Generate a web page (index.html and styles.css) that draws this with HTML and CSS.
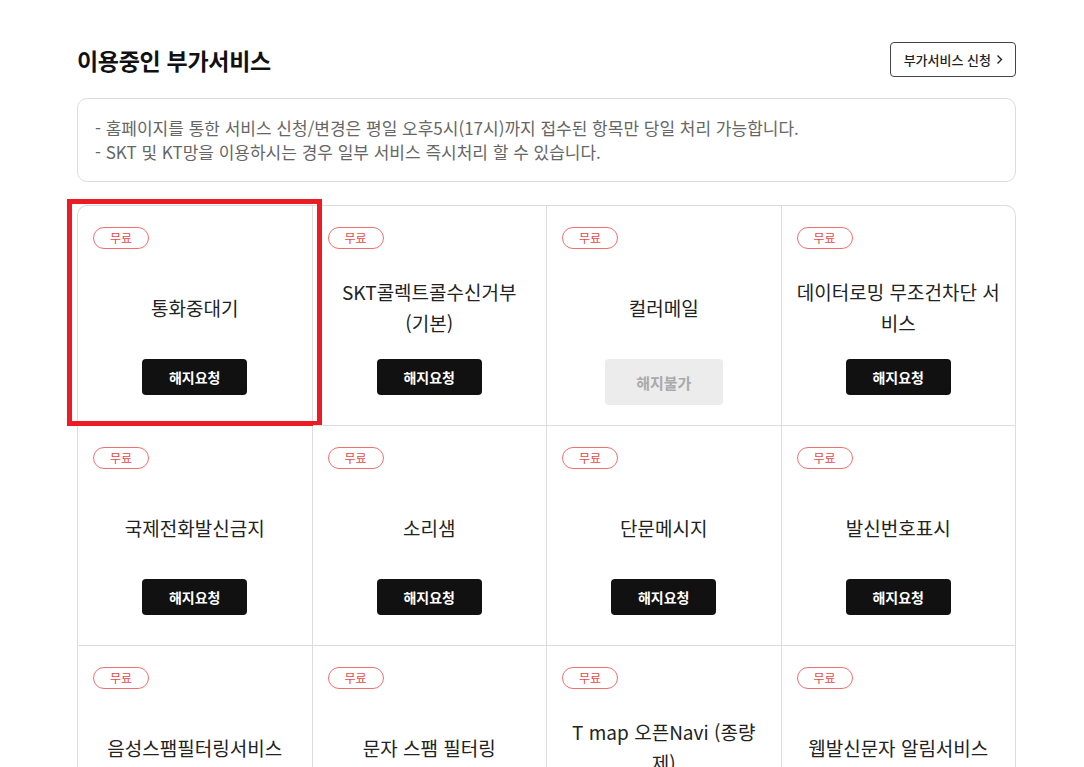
FILE: index.html
```html
<!DOCTYPE html>
<html lang="ko">
<head>
    <meta charset="UTF-8">
    <meta name="viewport" content="width=device-width, initial-scale=1.0">
    <title>이용중인 부가서비스</title>
    <link rel="stylesheet" href="styles.css">
</head>

<body>
    <div class="page">
        <!-- Header -->
        <div class="page-header">
            <h2 class="page-title">이용중인 부가서비스</h2>
            <a class="apply-btn" href="#">부가서비스 신청
                <svg class="chev" width="7" height="11" viewBox="0 0 7 11"><path d="M1.5 1.5 L5.5 5.5 L1.5 9.5" fill="none" stroke="#222" stroke-width="1.4"/></svg>
            </a>
        </div>

        <!-- Notice -->
        <div class="notice">
            <p>- 홈페이지를 통한 서비스 신청/변경은 평일 오후5시(17시)까지 접수된 항목만 당일 처리 가능합니다.</p>
            <p>- SKT 및 KT망을 이용하시는 경우 일부 서비스 즉시처리 할 수 있습니다.</p>
        </div>

        <!-- Services -->
        <div class="service-grid">
            <div class="service is-selected">
                <span class="badge">무료</span>
                <div class="service-name"><span>통화중대기</span></div>
                <button class="cancel-btn">해지요청</button>
            </div>
            <div class="service">
                <span class="badge">무료</span>
                <div class="service-name"><span>SKT콜렉트콜수신거부 (기본)</span></div>
                <button class="cancel-btn">해지요청</button>
            </div>
            <div class="service">
                <span class="badge">무료</span>
                <div class="service-name"><span>컬러메일</span></div>
                <button class="cancel-btn disabled">해지불가</button>
            </div>
            <div class="service">
                <span class="badge">무료</span>
                <div class="service-name"><span>데이터로밍 무조건차단 서비스</span></div>
                <button class="cancel-btn">해지요청</button>
            </div>

            <div class="service">
                <span class="badge">무료</span>
                <div class="service-name"><span>국제전화발신금지</span></div>
                <button class="cancel-btn">해지요청</button>
            </div>
            <div class="service">
                <span class="badge">무료</span>
                <div class="service-name"><span>소리샘</span></div>
                <button class="cancel-btn">해지요청</button>
            </div>
            <div class="service">
                <span class="badge">무료</span>
                <div class="service-name"><span>단문메시지</span></div>
                <button class="cancel-btn">해지요청</button>
            </div>
            <div class="service">
                <span class="badge">무료</span>
                <div class="service-name"><span>발신번호표시</span></div>
                <button class="cancel-btn">해지요청</button>
            </div>

            <div class="service">
                <span class="badge">무료</span>
                <div class="service-name"><span>음성스팸필터링서비스</span></div>
                <button class="cancel-btn">해지요청</button>
            </div>
            <div class="service">
                <span class="badge">무료</span>
                <div class="service-name"><span>문자 스팸 필터링</span></div>
                <button class="cancel-btn">해지요청</button>
            </div>
            <div class="service">
                <span class="badge">무료</span>
                <div class="service-name"><span>T map 오픈Navi (종량제)</span></div>
                <button class="cancel-btn">해지요청</button>
            </div>
            <div class="service">
                <span class="badge">무료</span>
                <div class="service-name"><span>웹발신문자 알림서비스</span></div>
                <button class="cancel-btn">해지요청</button>
            </div>
        </div>
    </div>
</body>
</html>
```

FILE: styles.css
```css
body {
    font-family: "Noto Sans CJK KR", "Noto Sans", sans-serif;
    margin: 0;
    padding: 0;
    color: #222;
    background-color: #fff;
}

.page {
    width: 939px;
    margin-left: 77px;
    padding-top: 42px;
    padding-bottom: 40px;
}

/* Header */
.page-header {
    display: flex;
    align-items: center;
    justify-content: space-between;
    height: 35px;
}

.page-title {
    margin: 0;
    font-size: 23px;
    font-weight: 700;
    color: #111;
    letter-spacing: -0.3px;
}

.apply-btn {
    display: flex;
    align-items: center;
    gap: 5px;
    box-sizing: border-box;
    height: 35px;
    padding: 0 12px 0 13px;
    border: 1px solid #444;
    border-radius: 4px;
    color: #222;
    font-size: 13px;
    font-weight: 500;
    text-decoration: none;
}

.chev {
    display: block;
}

/* Notice */
.notice {
    margin-top: 21px;
    padding: 17px 17px;
    border: 1px solid #ddd;
    border-radius: 10px;
}

.notice p {
    margin: 0;
    font-size: 17px;
    line-height: 24px;
    color: #666;
}

/* Grid */
.service-grid {
    display: grid;
    grid-template-columns: repeat(4, 1fr);
    margin-top: 23px;
    border-top: 1px solid #ddd;
    border-left: 1px solid #ddd;
    border-radius: 10px 10px 0 0;
}

.service {
    position: relative;
    display: flex;
    flex-direction: column;
    align-items: center;
    box-sizing: border-box;
    height: 220px;
    padding: 21px 15px 0;
    border-right: 1px solid #ddd;
    border-bottom: 1px solid #ddd;
}

.service:first-child {
    border-top-left-radius: 10px;
}

.service:nth-child(4) {
    border-top-right-radius: 10px;
}

.service.is-selected::after {
    content: "";
    position: absolute;
    top: -7px;
    left: -11px;
    right: -10px;
    bottom: -1px;
    border: 5px solid #ec1c24;
    pointer-events: none;
}

.badge {
    align-self: flex-start;
    box-sizing: border-box;
    width: 56px;
    height: 22px;
    border: 1px solid #f07070;
    border-radius: 11px;
    color: #e94848;
    font-size: 12px;
    line-height: 20px;
    text-align: center;
}

.service-name {
    display: flex;
    align-items: center;
    justify-content: center;
    width: 100%;
    height: 62px;
    margin-top: 27px;
    margin-bottom: 21px;
    font-size: 19px;
    line-height: 31px;
    text-align: center;
    word-break: break-all;
    color: #222;
}

.cancel-btn {
    width: 105px;
    height: 36px;
    border: none;
    border-radius: 4px;
    background-color: #111;
    color: #fff;
    font-family: inherit;
    font-size: 14px;
    font-weight: 700;
    cursor: pointer;
}

.cancel-btn.disabled {
    width: 118px;
    height: 46px;
    background-color: #ececec;
    color: #aaa;
    font-size: 15px;
    cursor: default;
}
```
